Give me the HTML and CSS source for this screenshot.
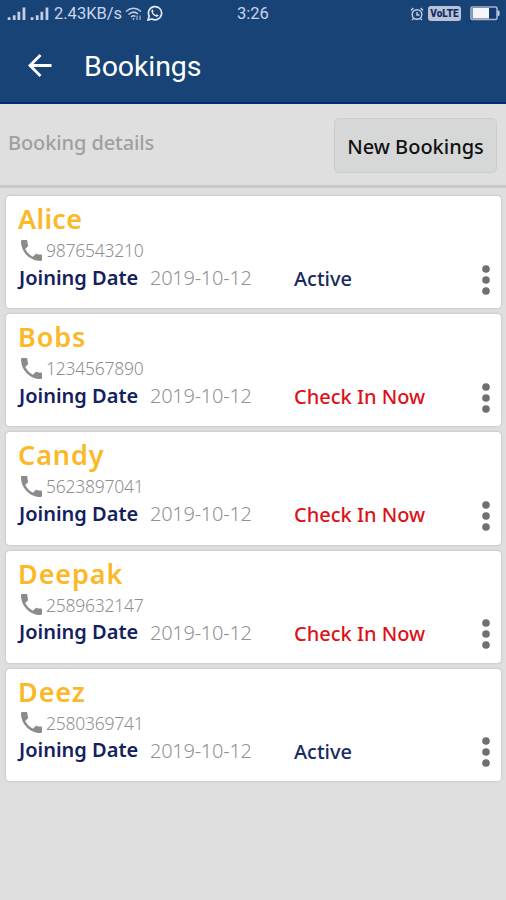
FILE: index.html
```
<!DOCTYPE html>
<html lang="en">
<head>
  <meta charset="UTF-8" />
  <meta name="viewport" content="width=device-width, initial-scale=1.0" />
  <title>Bookings</title>
  <link rel="stylesheet" href="styles.css">
</head>
<body>
  <svg class="defs" width="0" height="0">
    <symbol id="phone" viewBox="3 3 18 18">
      <path d="M6.62 10.79c1.44 2.83 3.76 5.14 6.59 6.59l2.2-2.2c.27-.27.67-.36 1.02-.24 1.12.37 2.33.57 3.57.57.55 0 1 .45 1 1V20c0 .55-.45 1-1 1-9.39 0-17-7.61-17-17 0-.55.45-1 1-1h3.5c.55 0 1 .45 1 1 0 1.25.2 2.45.57 3.57.11.35.03.74-.25 1.02l-2.2 2.2z"/>
    </symbol>
    <symbol id="more" viewBox="0 0 8 30">
      <circle cx="4" cy="4" r="3.8"/><circle cx="4" cy="15" r="3.8"/><circle cx="4" cy="26" r="3.8"/>
    </symbol>
    <symbol id="signal" viewBox="0 0 20 14">
      <path d="M0 11h3v3H0zM5.500 9h3v5h-3zM10.500 5h3v9h-3zM16 0.500h3V14h-3z"/>
    </symbol>
  </svg>

  <header class="header">
    <div class="status">
      <div class="status-left">
        <svg class="signal" width="20" height="13"><use href="#signal"/></svg>
        <svg class="signal second" width="20" height="13"><use href="#signal"/></svg>
        <span class="speed">2.43KB/s</span>
        <svg class="wifi" width="17" height="14" viewBox="0 0 17 14">
          <path d="M1 4.5Q8.5-2 16 4.5M3.5 7.5Q8.5 3 13 7M6 10Q8.5 8 10.5 9.5"/>
          <path class="dot" d="M7.3 11.3h2.4L8.5 13.5zM11.5 13V8.5h1V13zM14.5 8.5V13h1V8.5z"/>
        </svg>
        <svg class="whatsapp" width="16" height="16" viewBox="0 0 16 16">
          <path d="M1 15l1.2-3.8A6.6 6.6 0 1 1 5 14z"/>
          <path class="handset" d="M5.5 4.2l1.2 2-.8 1c.7 1.3 1.5 2.1 2.9 2.8l1-.8 1.9 1c-.3 1.5-1.6 1.7-2.9 1.2C6.5 10.700 5 9 4.500 7c-.2-1.300 0-2.300 1-2.800z"/>
        </svg>
      </div>
      <span class="clock">3:26</span>
      <div class="status-right">
        <svg class="alarm" width="14" height="14" viewBox="0 0 14 14">
          <circle cx="7" cy="7.5" r="4.8"/><path d="M7 5v3h2.5M1 3.5L3.300 1M10.700 1L13 3.500M3.500 11.500L2 13M10.500 11.500L12 13"/>
        </svg>
        <span class="volte">VoLTE</span>
        <svg class="battery" width="30" height="15" viewBox="0 0 30 15">
          <rect class="shell" x="1" y="1" width="26" height="12.5" rx="1.5"/>
          <rect class="level" x="2.5" y="2" width="16.500" height="10.500"/>
          <rect class="cap" x="27.5" y="4.5" width="2" height="5.5" rx="1"/>
        </svg>
      </div>
    </div>
    <div class="toolbar">
      <svg class="back" width="24" height="23" viewBox="0 0 24 23">
        <path d="M23.5 11.500H2M12.500 1L2 11.500 12.500 22"/>
      </svg>
      <h1>Bookings</h1>
    </div>
  </header>

  <div class="subheader">
    <span class="label">Booking details</span>
    <button class="new-booking">New Bookings</button>
  </div>

  <main class="list">
    <div class="card">
      <div class="name short">Alice</div>
      <div class="phone"><svg width="21" height="21"><use href="#phone"/></svg><span>9876543210</span></div>
      <div class="row">
        <span class="joining">Joining Date</span><span class="date">2019-10-12</span>
        <span class="state active">Active</span>
        <svg class="more" width="8" height="30"><use href="#more"/></svg>
      </div>
    </div>
    <div class="card">
      <div class="name">Bobs</div>
      <div class="phone"><svg width="21" height="21"><use href="#phone"/></svg><span>1234567890</span></div>
      <div class="row">
        <span class="joining">Joining Date</span><span class="date">2019-10-12</span>
        <span class="state checkin">Check In Now</span>
        <svg class="more" width="8" height="30"><use href="#more"/></svg>
      </div>
    </div>
    <div class="card">
      <div class="name">Candy</div>
      <div class="phone"><svg width="21" height="21"><use href="#phone"/></svg><span>5623897041</span></div>
      <div class="row">
        <span class="joining">Joining Date</span><span class="date">2019-10-12</span>
        <span class="state checkin">Check In Now</span>
        <svg class="more" width="8" height="30"><use href="#more"/></svg>
      </div>
    </div>
    <div class="card">
      <div class="name">Deepak</div>
      <div class="phone"><svg width="21" height="21"><use href="#phone"/></svg><span>2589632147</span></div>
      <div class="row">
        <span class="joining">Joining Date</span><span class="date">2019-10-12</span>
        <span class="state checkin">Check In Now</span>
        <svg class="more" width="8" height="30"><use href="#more"/></svg>
      </div>
    </div>
    <div class="card">
      <div class="name">Deez</div>
      <div class="phone"><svg width="21" height="21"><use href="#phone"/></svg><span>2580369741</span></div>
      <div class="row">
        <span class="joining">Joining Date</span><span class="date">2019-10-12</span>
        <span class="state active">Active</span>
        <svg class="more" width="8" height="30"><use href="#more"/></svg>
      </div>
    </div>
  </main>
</body>
</html>
```

FILE: styles.css
```
* {
  box-sizing: border-box;
}
body {
  margin: 0;
  height: 900px;
  overflow: hidden;
  background: #dfdfdf;
  font-family: "Noto Sans", "Open Sans", sans-serif;
  white-space: nowrap;
}
svg {
  display: block;
  flex: none;
}
.defs {
  display: none;
}
.header {
  height: 104px;
  background: #174377;
  border-bottom: 2px solid #042a70;
  color: #fff;
  font-family: Roboto, sans-serif;
}
.status {
  display: grid;
  grid-template-columns: 237px 1fr auto;
  align-items: center;
  height: 27px;
  padding-right: 6px;
  color: #c9d4ea;
}
.status-left,
.status-right {
  display: flex;
  align-items: center;
}
.status-left {
  padding-left: 7px;
}
.signal {
  fill: #c3cde3;
}
.second {
  margin-left: 3px;
}
.speed {
  margin-left: 4px;
  width: 68px;
  font-size: 16.5px;
}
.wifi {
  margin-left: 3px;
  fill: none;
  stroke: #c3cde3;
  stroke-width: 1.5;
}
.wifi .dot {
  fill: #c3cde3;
  stroke: none;
}
.whatsapp {
  margin-left: 5px;
  margin-top: -1px;
  fill: none;
  stroke: #e4e9f5;
  stroke-width: 1.7;
}
.whatsapp .handset {
  fill: #e4e9f5;
  stroke: none;
}
.clock {
  font-size: 16.5px;
}
.alarm {
  fill: none;
  stroke: #c3cde3;
  stroke-width: 1.4;
}
.volte {
  width: 33px;
  height: 15px;
  margin-left: 4px;
  border-radius: 3px;
  background: #b9c2d6;
  color: #122d66;
  font-size: 10px;
  font-weight: 900;
  line-height: 15px;
  text-align: center;
}
.battery {
  margin-left: 9px;
}
.shell {
  fill: #173a72;
  stroke: #a9b4cc;
  stroke-width: 1.6;
}
.level {
  fill: #f3f5fb;
}
.cap {
  fill: #c3cde3;
}
.toolbar {
  display: flex;
  align-items: center;
  height: 76px;
  padding-left: 28px;
}
.back {
  fill: none;
  stroke: #fff;
  stroke-width: 2.8;
}
h1 {
  margin: 3px 0 0 32px;
  font-size: 28.5px;
  font-weight: 400;
  letter-spacing: -0.1px;
}
.subheader {
  display: flex;
  justify-content: space-between;
  align-items: flex-start;
  height: 84px;
  padding: 14px 9px 0 8px;
  border-bottom: 3px solid #c7c8c8;
}
.label {
  margin-top: 11px;
  color: #a0a0a0;
  font-size: 20px;
  font-weight: 500;
  line-height: 28px;
  letter-spacing: -0.1px;
}
.new-booking {
  width: 163px;
  height: 55px;
  padding: 2px 0 0;
  border: 1px solid #cccdcd;
  border-radius: 5px;
  background: #d6d8d8;
  color: #111;
  font-family: inherit;
  font-size: 20px;
  font-weight: 500;
}
.list {
  display: flex;
  flex-direction: column;
  gap: 6px;
  padding: 8px 5px 0 6px;
}
.card {
  height: 112.2px;
  padding: 7px 11px 0 12px;
  border-radius: 4px;
  background: #fff;
  box-shadow: 0 0 2px 1px #cbcbcb;
}
.name {
  height: 33px;
  color: #fbb829;
  font-size: 27px;
  font-weight: 600;
  line-height: 32px;
  letter-spacing: 0.9px;
}
.short {
  letter-spacing: 0.3px;
}
.phone {
  display: flex;
  align-items: center;
  height: 28px;
  padding-left: 3px;
  color: #8f8f8f;
  font-size: 17.5px;
  font-weight: 300;
}
.phone svg {
  fill: #8b8b8b;
}
.phone span {
  margin-left: 4px;
  letter-spacing: -0.25px;
}
.row {
  display: flex;
  align-items: center;
  height: 28px;
  line-height: 28px;
  font-size: 20px;
}
.joining {
  width: 132px;
  padding-left: 1px;
  margin-top: -1px;
  color: #14205f;
  font-weight: 600;
}
.date {
  width: 144px;
  color: #929292;
  font-weight: 300;
  letter-spacing: -0.25px;
}
.state {
  font-weight: 500;
  padding-top: 2px;
}
.active {
  color: #172960;
}
.checkin {
  color: #dc1219;
}
.more {
  margin-left: auto;
  margin-top: 3px;
  fill: #6f6f6f;
}
```
